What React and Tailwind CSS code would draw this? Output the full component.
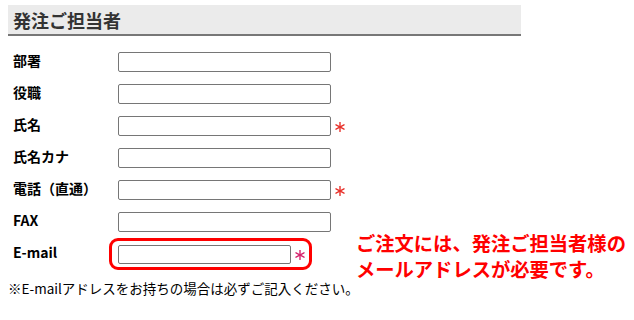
import React from "react";

const rows = [
  { label: "部署" },
  { label: "役職" },
  { label: "氏名", required: true },
  { label: "氏名カナ" },
  { label: "電話（直通）", required: true },
  { label: "FAX" },
];

function Star({ color }) {
  return (
    <svg className="ml-[4px] mt-[2px]" width="10" height="10" viewBox="0 0 10 10" stroke={color} strokeWidth="1.4" strokeLinecap="round">
      <line x1="5" y1="0.5" x2="5" y2="9.5" />
      <line x1="1" y1="2.8" x2="9" y2="7.2" />
      <line x1="1" y1="7.2" x2="9" y2="2.8" />
    </svg>
  );
}

function Field({ label, required }) {
  return (
    <div className="flex items-center h-[32px] pl-[13px]">
      <div className="w-[105px] mb-[4px] text-[14px] font-bold text-black">{label}</div>
      <input className="w-[213px] h-[20px] border border-[#767676] rounded-[2px] bg-white" />
      {required && <Star color="#e8322b" />}
    </div>
  );
}

export default function App() {
  return (
    <div className="relative w-[634px] h-[320px] bg-white font-['Noto_Sans_CJK_JP',sans-serif]">
      <div className="pt-[5px] pl-[8px]">
        <div className="w-[513px] h-[31px] bg-[#ebebeb] border-b-2 border-[#777] pl-[5px] flex items-center">
          <h2 className="text-[18px] font-bold text-[#333] leading-none">発注ご担当者</h2>
        </div>
      </div>

      <div className="mt-[10px]">
        {rows.map((r) => (
          <Field key={r.label} {...r} />
        ))}
        <div className="flex items-center h-[32px] pl-[13px]">
          <div className="w-[96px] mb-[4px] text-[14px] font-bold text-black">E-mail</div>
          <div className="flex items-center w-[203px] h-[32px] border-[3px] border-[#ff0000] rounded-[9px] pl-[6px]">
            <input className="w-[173px] h-[19px] border border-[#767676] rounded-[2px] bg-white" />
            <Star color="#d6246e" />
          </div>
        </div>
      </div>

      <p className="mt-[12px] pl-[8px] text-[13.5px] text-black leading-none">
        ※E-mailアドレスをお持ちの場合は必ずご記入ください。
      </p>

      <div className="absolute left-[356px] top-[230px] text-[19.3px] font-bold text-[#f00] leading-[26px]">
        <div>ご注文には、発注ご担当者様の</div>
        <div>メールアドレスが必要です。</div>
      </div>
    </div>
  );
}
